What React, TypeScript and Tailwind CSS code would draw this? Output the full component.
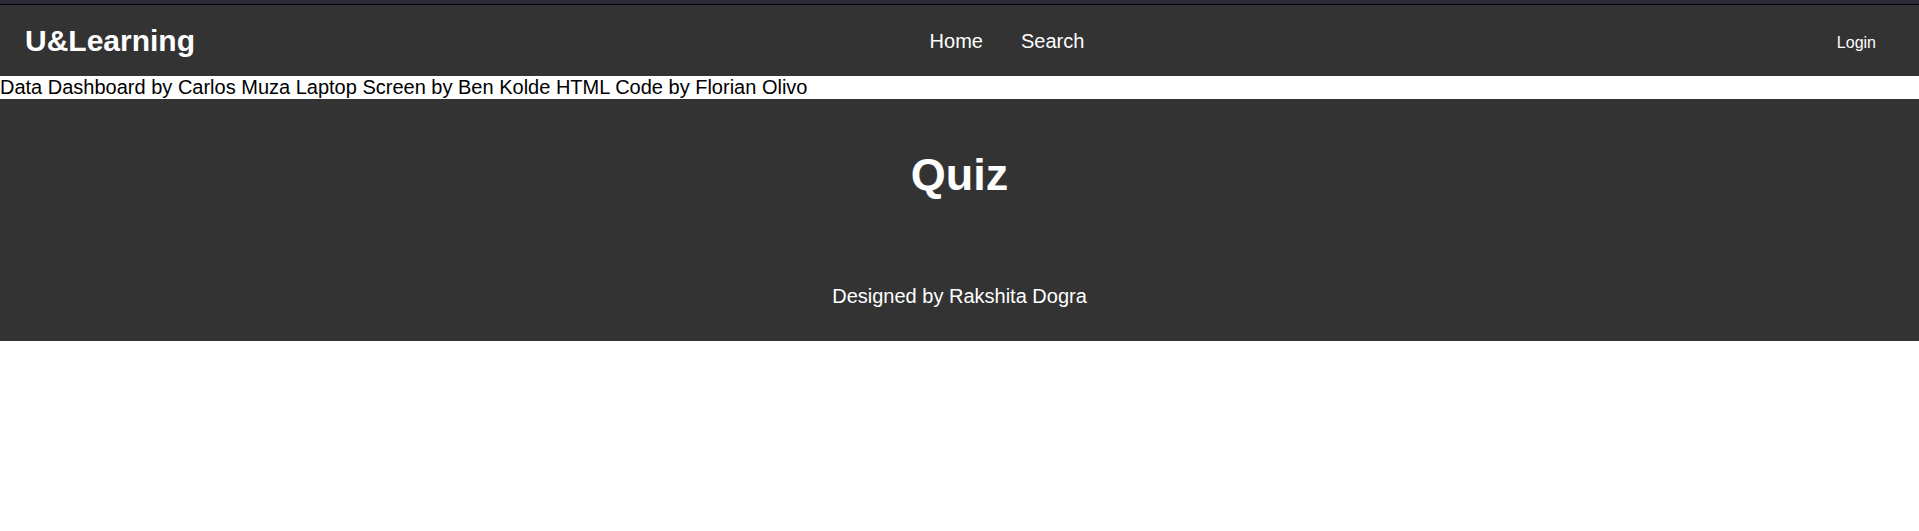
import React from 'react';

const App: React.FC = () => {
  return (
    <div className="min-h-screen bg-white font-['Liberation_Sans',Arial,sans-serif]">
      {/* thin top strip */}
      <div className="h-[5px] bg-[#2b2a38] border-b border-black" />

      {/* Navbar */}
      <header className="h-[71px] bg-[#333333] flex items-center justify-between pl-[25px] pr-[43px] text-white">
        <div className="text-[30px] font-bold leading-none">U&amp;Learning</div>
        <nav className="flex items-center gap-[38px] text-[20px] mr-[18px]">
          <a href="#">Home</a>
          <a href="#">Search</a>
        </nav>
        <button className="text-[16px] mt-[4px]">Login</button>
      </header>

      {/* Image credits */}
      <div className="text-[20px] leading-[23px] text-black">
        Data Dashboard by Carlos Muza Laptop Screen by Ben Kolde HTML Code by Florian Olivo
      </div>

      {/* Footer */}
      <footer className="bg-[#333333] text-white flex flex-col items-center pt-[50px] pb-[33px]">
        <h1 className="text-[45px] font-bold leading-[52px]">Quiz</h1>
        <p className="mt-[84px] text-[20px] leading-[23px]">Designed by Rakshita Dogra</p>
      </footer>
    </div>
  );
};

export default App;
